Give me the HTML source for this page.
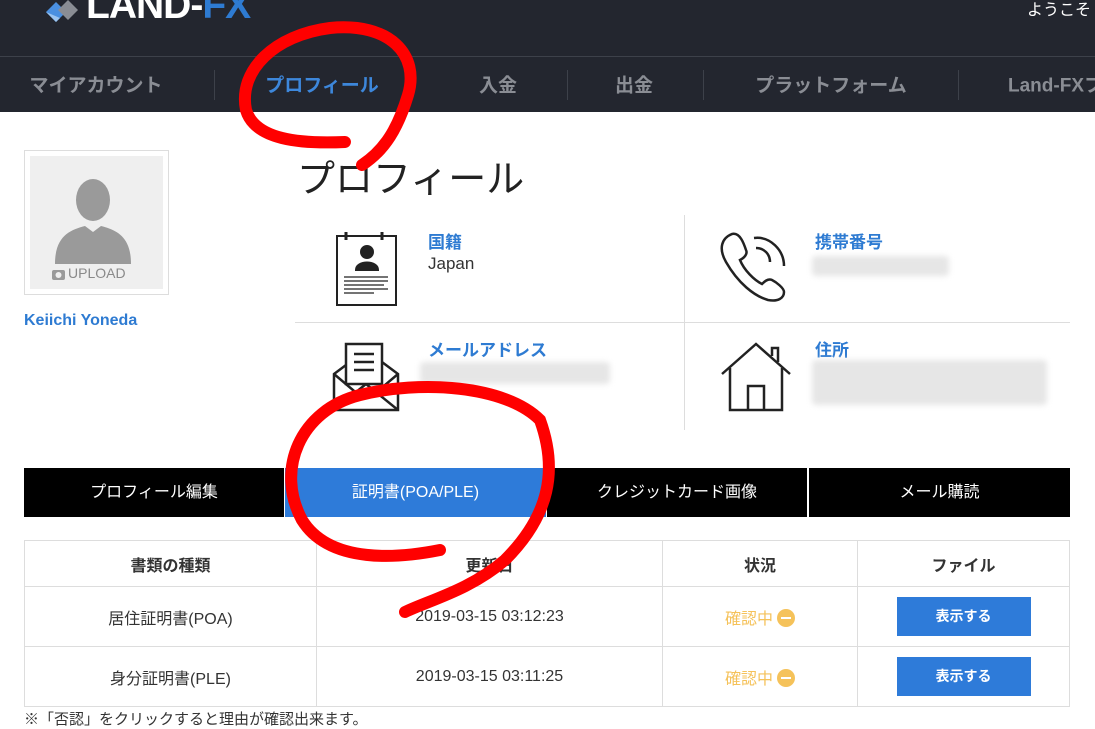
<!DOCTYPE html>
<html><head><meta charset="utf-8"><style>
body{margin:0;width:1095px;height:720px;overflow:hidden;background:#fff;font-family:"Liberation Sans","Noto Sans CJK JP",sans-serif;position:relative}
.a{position:absolute}
.nav{position:absolute;top:84px;transform:translate(-50%,-50%);color:#8a8d94;font-weight:bold;font-size:19px;white-space:nowrap}
.sep{position:absolute;top:70px;width:1px;height:30px;background:#3d414a}
.lbl{position:absolute;color:#2e7bd2;font-weight:bold;font-size:17px}
.blur{position:absolute;background:#e6e6e6;filter:blur(3px);border-radius:4px}
.tab{position:absolute;top:468px;height:49px;line-height:49px;text-align:center;color:#fff;font-size:16px;background:#000}
td{border:1px solid #ddd;text-align:center;font-size:16px;color:#333;padding:0}
.btn{display:inline-block;background:#2e7bd9;color:#fff;font-weight:bold;font-size:14px;width:134px;height:39px;line-height:39px}
.st{color:#f5c25a;font-size:16px}
.dot{display:inline-block;width:18px;height:18px;border-radius:50%;background:#f5c25a;vertical-align:-3px;margin-left:4px;position:relative}
.dot:after{content:"";position:absolute;left:4px;right:4px;top:8px;height:2px;background:#fff}
</style></head><body>
<div class="a" style="left:0;top:0;width:1095px;height:112px;background:#23262f"></div>
<div class="a" style="left:0;top:56px;width:1095px;height:1px;background:#3d414a"></div>
<svg class="a" style="left:44px;top:0" width="44" height="30"><path d="M2,12 L12,2 L22,12 L12,22Z" fill="#4a8fe0"/><path d="M14,10 L24,0 L34,10 L24,20Z" fill="#8a8d94"/><path d="M2,12 L12,22 L16,18" fill="#9cc4f0"/></svg>
<div class="a" style="left:86px;top:-16px;font-size:39px;font-weight:bold;color:#fff;letter-spacing:-1px">LAND-<span style="color:#2e7bd2">FX</span></div>
<div class="a" style="left:1027px;top:-4px;color:#fff;font-size:16px">ようこそ</div>
<div class="nav" style="left:96px">マイアカウント</div>
<div class="nav" style="left:322px;color:#3d87db">プロフィール</div>
<div class="nav" style="left:498px">入金</div>
<div class="nav" style="left:634px">出金</div>
<div class="nav" style="left:831px">プラットフォーム</div>
<div class="nav" style="left:1008px;transform:translate(0,-50%)">Land-FXフ</div>
<div class="sep" style="left:214px"></div><div class="sep" style="left:409px"></div><div class="sep" style="left:567px"></div><div class="sep" style="left:703px"></div><div class="sep" style="left:958px"></div>
<div class="a" style="left:24px;top:150px;width:145px;height:145px;border:1px solid #ddd;box-sizing:border-box;padding:5px"><div style="width:133px;height:133px;background:#efefef;position:relative">
<svg width="133" height="133" style="position:absolute;left:0;top:0"><ellipse cx="63" cy="44" rx="17" ry="21" fill="#9a9a9a"/><path d="M25,108 C25,80 40,74 55,70 L63,76 L71,70 C86,74 101,80 101,108Z" fill="#9a9a9a"/><rect x="22" y="114" width="13" height="10" rx="2" fill="#9a9a9a"/><circle cx="28.5" cy="119" r="3" fill="#efefef"/></svg>
<div style="position:absolute;left:38px;top:109px;color:#8a8a8a;font-size:14px">UPLOAD</div></div></div>
<div class="a" style="left:24px;top:312px;color:#2e7bd2;font-weight:bold;font-size:16px">Keiichi Yoneda</div>
<div class="a" style="left:297px;top:148px;font-size:38px;color:#222">プロフィール</div>
<div class="a" style="left:295px;top:322px;width:775px;height:1px;background:#ddd"></div>
<div class="a" style="left:684px;top:215px;width:1px;height:215px;background:#ddd"></div>
<svg class="a" style="left:330px;top:228px" width="70" height="80" fill="none" stroke="#222" stroke-width="2"><rect x="7" y="8" width="59" height="69"/><path d="M16,4v8M52,4v8" stroke-width="3"/><circle cx="37" cy="24" r="6" fill="#222"/><path d="M26,42 C26,32 48,32 48,42Z" fill="#222"/><path d="M14,49h44M14,53h44M14,57h40M14,61h44M14,65h30" stroke-width="1.3"/></svg>
<div class="lbl" style="left:428px;top:228px">国籍</div>
<div class="a" style="left:428px;top:254px;font-size:17px;color:#333">Japan</div>
<svg class="a" style="left:718px;top:228px" width="80" height="80" fill="none" stroke="#222" stroke-width="2.5"><path d="M14,6 C4,10 0,20 8,34 C20,55 36,68 50,72 C60,74 66,70 66,64 C66,60 58,54 54,52 C50,50 46,54 44,56 C36,52 26,42 22,32 C26,30 30,26 28,22 C26,16 22,4 14,6Z"/><path d="M36,10 C52,8 66,22 66,38"/><path d="M38,20 C46,20 52,26 52,34"/></svg>
<div class="lbl" style="left:815px;top:228px">携帯番号</div>
<div class="blur" style="left:812px;top:256px;width:137px;height:20px"></div>
<svg class="a" style="left:330px;top:340px" width="75" height="75" fill="none" stroke="#222" stroke-width="2.5"><path d="M4,34 L36,10 L68,34 V70 H4Z"/><path d="M4,70 L36,44 L68,70"/><rect x="16" y="4" width="36" height="40" fill="#fff"/><path d="M24,14h20M24,22h20M24,30h20"/><path d="M4,34 L30,56 M68,34 L42,56"/></svg>
<div class="lbl" style="left:428px;top:336px">メールアドレス</div>
<div class="blur" style="left:420px;top:362px;width:190px;height:22px"></div>
<svg class="a" style="left:718px;top:340px" width="75" height="75" fill="none" stroke="#222" stroke-width="2.5"><path d="M4,34 L38,4 L72,34"/><path d="M12,28 V70 H64 V28"/><path d="M30,70 V46 H46 V70"/><path d="M54,16 V8 H60 V22"/></svg>
<div class="lbl" style="left:815px;top:336px">住所</div>
<div class="blur" style="left:812px;top:360px;width:235px;height:45px"></div>
<div class="tab" style="left:24px;width:260px">プロフィール編集</div>
<div class="tab" style="left:285px;width:261px;background:#2e7bd9">証明書(POA/PLE)</div>
<div class="tab" style="left:547px;width:260px">クレジットカード画像</div>
<div class="tab" style="left:809px;width:261px">メール購読</div>
<table class="a" style="left:24px;top:540px;width:1046px;border-collapse:collapse">
<tr style="height:46px;font-weight:bold"><td style="width:291px;font-weight:bold">書類の種類</td><td style="width:345px;font-weight:bold">更新日</td><td style="width:194px;font-weight:bold">状況</td><td style="font-weight:bold">ファイル</td></tr>
<tr style="height:60px"><td>居住証明書(POA)</td><td>2019-03-15 03:12:23</td><td><span class="st">確認中</span><span class="dot"></span></td><td><span class="btn">表示する</span></td></tr>
<tr style="height:60px"><td>身分証明書(PLE)</td><td>2019-03-15 03:11:25</td><td><span class="st">確認中</span><span class="dot"></span></td><td><span class="btn">表示する</span></td></tr>
</table>
<div class="a" style="left:24px;top:708px;font-size:15px;color:#333">※「否認」をクリックすると理由が確認出来ます。</div>
<svg class="a" style="left:0;top:0" width="1095" height="720" fill="none" stroke="#f00" stroke-width="12" stroke-linecap="round"><path d="M345,142 C300,144 255,140 246,110 C238,70 275,35 330,28 C390,22 420,55 408,95 C398,128 385,150 362,165"/><path d="M440,550 C400,558 330,565 302,520 C275,470 300,410 360,395 C420,380 505,385 540,420 C558,470 550,515 505,560 C470,590 430,600 405,612"/></svg>
</body></html>
